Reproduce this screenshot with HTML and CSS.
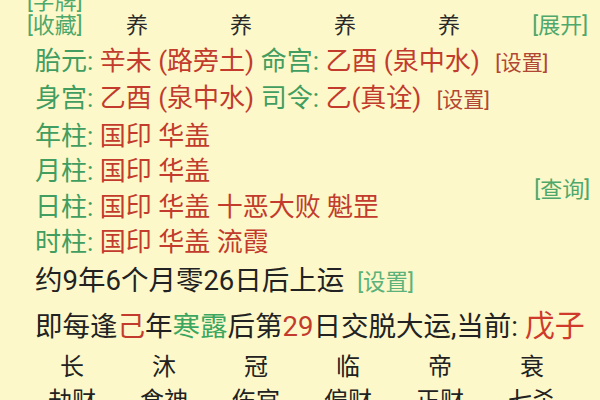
FILE: index.html
```html
<!DOCTYPE html>
<html lang="zh-CN">
<head>
<meta charset="utf-8">
<link rel="stylesheet" href="styles.css">
</head>
<body>
<div class="page">
  <div class="head">
    <span class="link">[字牌]</span><span></span><span></span><span></span><span></span><span></span>
    <span class="link">[收藏]</span>
    <span class="cell">养</span><span class="cell">养</span><span class="cell">养</span><span class="cell">养</span>
    <span class="link right">[展开]</span>
  </div>

  <div class="info">
    <div class="row"><span class="g">胎元:</span> <span class="r">辛未 (路旁土)</span> <span class="g">命宫:</span> <span class="r">乙酉 (泉中水)</span> <span class="set">[设置]</span></div>
    <div class="row"><span class="g">身宫:</span> <span class="r">乙酉 (泉中水)</span> <span class="g">司令:</span> <span class="r">乙(真诠)</span> <span class="set">[设置]</span></div>
    <div class="pillars">
      <div class="plist">
        <div class="row"><span class="g">年柱:</span> <span class="r">国印 华盖</span></div>
        <div class="row"><span class="g">月柱:</span> <span class="r">国印 华盖</span></div>
        <div class="row"><span class="g">日柱:</span> <span class="r">国印 华盖 十恶大败 魁罡</span></div>
        <div class="row"><span class="g">时柱:</span> <span class="r">国印 华盖 流霞</span></div>
      </div>
      <span class="link">[查询]</span>
    </div>
  </div>

  <div class="yun">
    <div class="line">约9年6个月零26日后上运 <span class="set2">[设置]</span></div>
    <div class="line">即每逢<span class="r">己</span>年<span class="g2">寒露</span>后第<span class="r">29</span>日交脱大运,当前: <span class="cur">戊子</span></div>
  </div>

  <div class="grid6">
    <span>长</span><span>沐</span><span>冠</span><span>临</span><span>帝</span><span>衰</span>
    <span>劫财</span><span>食神</span><span>伤官</span><span>偏财</span><span>正财</span><span>七杀</span>
  </div>
</div>
</body>
</html>
```

FILE: styles.css
```css
html, body {
  margin: 0;
  padding: 0;
  background: #fcf8c9;
  overflow: hidden;
}
.page {
  width: 600px;
  height: 400px;
  overflow: hidden;
  font-family: Roboto, "Noto Sans CJK SC", sans-serif;
  color: #222;
}
.head {
  display: grid;
  grid-template-columns: 58px repeat(4, 104px) 1fr;
  padding: 0 12px 0 27px;
  margin-top: -10px;
  line-height: 24px;
  font-size: 22px;
}
.head .cell {
  text-align: center;
  color: #2a2a2a;
}
.link {
  color: #4ea86c;
  font-size: 22px;
}
.right {
  text-align: right;
}
.info {
  margin-top: 6px;
  padding: 0 10px 0 35px;
  font-size: 26px;
  line-height: 35.4px;
}
.row {
  white-space: nowrap;
}
.g { color: #419d60; }
.r { color: #c23b2c; }
.set {
  color: #b24634;
  font-size: 21px;
  margin-left: 9px;
}
.pillars {
  display: flex;
  align-items: center;
  justify-content: space-between;
}
.yun {
  margin-top: -1px;
  padding-left: 35px;
  font-size: 27.5px;
  line-height: 44px;
  white-space: nowrap;
}
.set2 {
  color: #5bb27a;
  font-size: 22.5px;
  margin-left: 6px;
}
.g2 { color: #3aa65f; }
.cur {
  color: #cf3a2c;
  font-size: 30px;
}
.grid6 {
  display: grid;
  grid-template-columns: repeat(6, 92px);
  padding-left: 26px;
  margin-top: 1px;
  font-size: 24px;
  line-height: 34px;
  text-align: center;
}
```
